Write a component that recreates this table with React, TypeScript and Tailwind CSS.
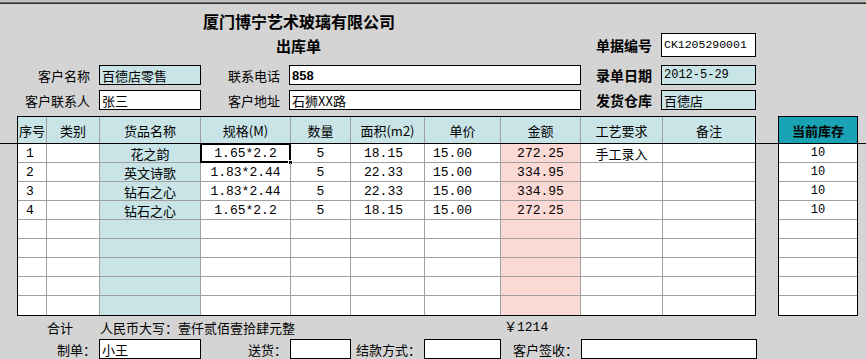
import React from "react";

type Item = {
  no: string;
  name: string;
  spec: string;
  qty: string;
  area: string;
  price: string;
  amount: string;
  craft: string;
};

const items: Array<Item> = [
  { no: "1", name: "花之韵", spec: "1.65*2.2", qty: "5", area: "18.15", price: "15.00", amount: "272.25", craft: "手工录入" },
  { no: "2", name: "英文诗歌", spec: "1.83*2.44", qty: "5", area: "22.33", price: "15.00", amount: "334.95", craft: "" },
  { no: "3", name: "钻石之心", spec: "1.83*2.44", qty: "5", area: "22.33", price: "15.00", amount: "334.95", craft: "" },
  { no: "4", name: "钻石之心", spec: "1.65*2.2", qty: "5", area: "18.15", price: "15.00", amount: "272.25", craft: "" },
];

const emptyRow: Item = { no: "", name: "", spec: "", qty: "", area: "", price: "", amount: "", craft: "" };
const rows = [...items, ...Array(5).fill(emptyRow)] as Array<Item>;
const stock = ["10", "10", "10", "10", "", "", "", "", ""];

const cols = "grid grid-cols-[29px_53px_101px_90px_60px_74px_76px_80px_82px_92px]";
const cell = "flex items-center border-r border-[#a0a0a0]";
const mono = "font-['Liberation_Mono','Noto_Sans_CJK_SC',monospace]";

const Field = ({ w, blue, children, className = "" }: { w: string; blue?: boolean; children?: React.ReactNode; className?: string }) => (
  <div className={`${w} h-[20px] border border-black flex items-center pl-[2px] text-[13px] leading-none ${blue ? "bg-[#c9e4e7]" : "bg-white"} ${className}`}>
    {children}
  </div>
);

const Label = ({ w, bold, children }: { w: string; bold?: boolean; children: React.ReactNode }) => (
  <div className={`${w} text-right pr-[9px] leading-none ${bold ? "font-bold text-[14px]" : "text-[13px]"}`}>{children}</div>
);

const App = () => {
  return (
    <div className="w-[866px] h-[359px] overflow-hidden bg-[#d4d4d4] text-black font-['Noto_Sans_CJK_SC',sans-serif]">
      {/* window edge */}
      <div className="h-[2px] bg-[#c4c2ba]" />
      <div className="h-px bg-[#6b6b6b]" />
      <div className="h-px bg-[#2e2e2e]" />

      {/* titles */}
      <div className="h-[29px] pt-[4px] pl-[203px] flex items-center text-[16px] font-bold leading-none">
        厦门博宁艺术玻璃有限公司
      </div>
      <div className="h-[24px] flex items-center">
        <div className="w-[580px] pl-[276px] text-[15px] font-bold leading-none">出库单</div>
        <Label w="w-[81px]" bold>单据编号</Label>
        <Field w="w-[95px]" className={`h-[24px] !text-[11.5px] ${mono}`}>CK1205290001</Field>
      </div>

      {/* customer info */}
      <div className="mt-[8px] h-[20px] flex items-center">
        <Label w="w-[99px]">客户名称</Label>
        <Field w="w-[102px]" blue>百德店零售</Field>
        <Label w="w-[88px]">联系电话</Label>
        <Field w="w-[292px]" className="font-['Liberation_Sans'] font-bold">858</Field>
        <Label w="w-[80px]" bold>录单日期</Label>
        <Field w="w-[95px]" blue className={`!text-[12px] ${mono}`}>2012-5-29</Field>
      </div>
      <div className="mt-[5px] h-[20px] flex items-center">
        <Label w="w-[99px]">客户联系人</Label>
        <Field w="w-[102px]">张三</Field>
        <Label w="w-[88px]">客户地址</Label>
        <Field w="w-[292px]">石狮XX路</Field>
        <Label w="w-[80px]" bold>发货仓库</Label>
        <Field w="w-[95px]" blue>百德店</Field>
      </div>

      {/* item table + stock */}
      <div className="mt-[6px] flex">
        <div className="w-[17px]"><div className="h-[28px] border-b border-black" /></div>

        <div className="w-[739px] border border-black bg-white text-[13px] leading-none">
          <div className={`${cols} h-[27px] border-b border-black bg-[#c9e4e7]`}>
            <div className={`${cell} pl-[1px]`}>序号</div>
            <div className={`${cell} pl-[13px]`}>类别</div>
            <div className={`${cell} justify-center`}>货品名称</div>
            <div className={`${cell} justify-center`}>规格(M)</div>
            <div className={`${cell} justify-center`}>数量</div>
            <div className={`${cell} justify-center`}>面积(m2)</div>
            <div className={`${cell} justify-center`}>单价</div>
            <div className={`${cell} justify-center`}>金额</div>
            <div className={`${cell} justify-center`}>工艺要求</div>
            <div className="flex items-center justify-center">备注</div>
          </div>
          {rows.map((r, i) => (
            <div key={i} className={`${cols} h-[19px] ${i < rows.length - 1 ? "border-b border-[#a0a0a0]" : ""}`}>
              <div className={`${cell} pl-[8px] ${mono}`}>{r.no}</div>
              <div className={cell} />
              <div className={`${cell} justify-center bg-[#c9e4e7]`}>{r.name}</div>
              <div className={`${cell} justify-center relative ${mono}`}>
                {r.spec}
                {i === 0 && (
                  <>
                    <div className="absolute -left-px -top-px -right-px -bottom-px border-2 border-black" />
                    <div className="absolute -right-[3px] -bottom-[3px] w-[5px] h-[5px] bg-black border border-white" />
                  </>
                )}
              </div>
              <div className={`${cell} justify-center ${mono}`}>{r.qty}</div>
              <div className={`${cell} justify-center pr-[8px] ${mono}`}>{r.area}</div>
              <div className={`${cell} pl-[8px] ${mono}`}>{r.price}</div>
              <div className={`${cell} justify-center bg-[#fbd9d4] ${mono}`}>{r.amount}</div>
              <div className={`${cell} justify-center`}>{r.craft}</div>
              <div />
            </div>
          ))}
        </div>

        <div className="w-[22px]"><div className="h-[28px] border-b border-black" /></div>

        <div className="w-[80px] border border-black bg-white">
          <div className="h-[27px] border-b border-black bg-[#1aa3b4] flex items-center justify-center text-[13px] font-bold leading-none">
            当前库存
          </div>
          {stock.map((s, i) => (
            <div
              key={i}
              className={`h-[19px] flex items-center justify-center text-[12px] leading-none ${mono} ${i < stock.length - 1 ? "border-b border-[#a0a0a0]" : ""}`}
            >
              {s}
            </div>
          ))}
        </div>

        <div className="flex-1"><div className="h-[28px] border-b border-black" /></div>
      </div>

      {/* totals */}
      <div className="h-[23px] flex items-center text-[13px] leading-none">
        <div className="w-[100px] pl-[47px]">合计</div>
        <div className="w-[404px]">人民币大写：壹仟贰佰壹拾肆元整</div>
        <div className={mono}>￥1214</div>
      </div>

      {/* signatures */}
      <div className="h-[20px] flex items-center">
        <Label w="w-[99px] !pr-[3px]">制单：</Label>
        <Field w="w-[102px]">小王</Field>
        <Label w="w-[89px] !pr-[3px]">送货：</Label>
        <Field w="w-[61px]" />
        <Label w="w-[73px] !pr-[3px]">结款方式：</Label>
        <Field w="w-[77px]" />
        <Label w="w-[80px] !pr-[3px]">客户签收：</Label>
        <Field w="w-[176px]" />
      </div>
    </div>
  );
};

export default App;
